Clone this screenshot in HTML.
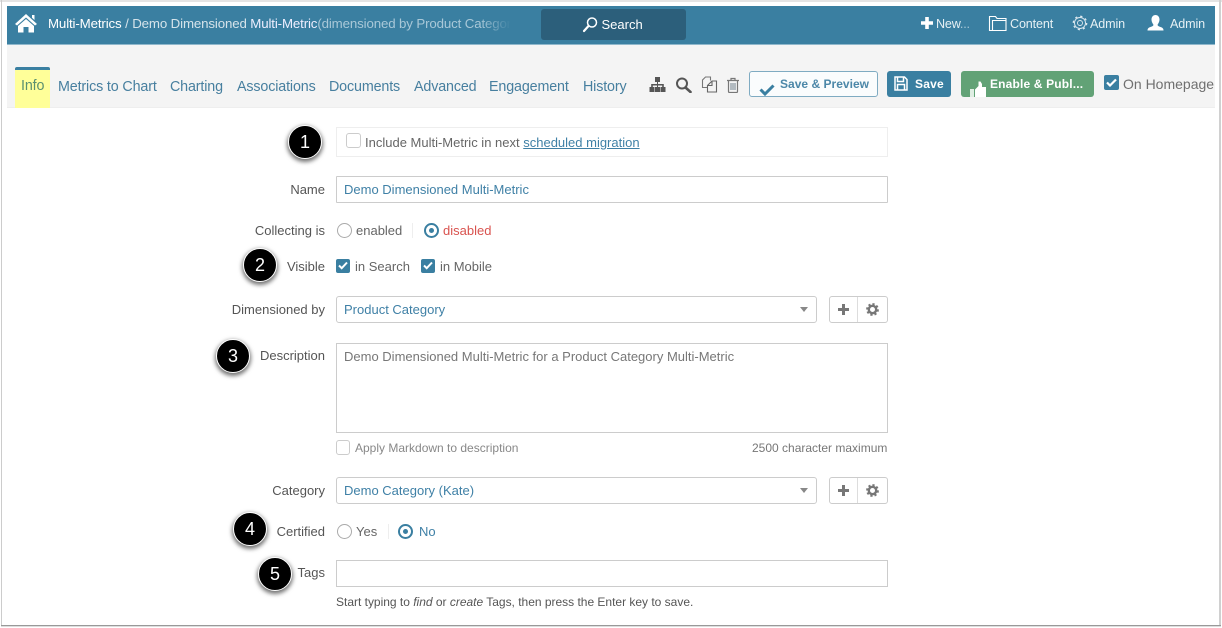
<!DOCTYPE html>
<html><head><meta charset="utf-8">
<style>
html,body{margin:0;padding:0;background:#fff}
#p{position:relative;width:1222px;height:628px;overflow:hidden;background:#fff;font-family:"Liberation Sans",sans-serif;font-size:13px;color:#666}
#p div,#p span.a,#p svg{position:absolute}
.t{white-space:nowrap;line-height:16px}
.l{white-space:nowrap;line-height:16px;right:897px;text-align:right;color:#555}
.b{border:1px solid #ccc;box-sizing:border-box;background:#fff}
.blue{color:#3f80a6}
.tab{font-size:14.3px;color:#477f9f;top:79px;white-space:nowrap;line-height:16px;letter-spacing:-.14px}
.num{width:34px;height:34px;border-radius:50%;background:#000;border:1px solid #fff;box-shadow:0 2px 4px 1px rgba(0,0,0,.55);color:#fff;font-size:18px;line-height:32px;text-align:center;box-sizing:border-box;font-weight:normal}
.cb{width:14px;height:14px;background:#3a7fa1;border-radius:2px}
.cbo{width:15px;height:15px;border:1px solid #ccc;border-radius:3px;box-sizing:border-box;background:#fff}
.r{width:15px;height:15px;border:1px solid #aaa;border-radius:50%;box-sizing:border-box;background:#fff}
.ro{width:15px;height:15px;border:2px solid #3a7fa1;border-radius:50%;box-sizing:border-box;background:#fff}
.ro:after{content:"";position:absolute;left:3px;top:3px;width:5px;height:5px;border-radius:50%;background:#3a7fa1}
.h{color:#fff;top:16px;line-height:16px;white-space:nowrap;font-size:12.6px}
</style></head><body><div id="p">
<div style="left:0;top:0;width:1222px;height:2px;background:#e4e4e4"></div>
<div style="left:1px;top:0;width:1px;height:626px;background:#ccc"></div>
<div style="left:1219px;top:0;width:2px;height:626px;background:#d0d0d0"></div>
<div style="left:1px;top:625px;width:1220px;height:1px;background:#999"></div>
<div style="left:1px;top:626px;width:1220px;height:1px;background:#ddd"></div>

<div style="left:7px;top:6px;width:1208px;height:38px;background:#3a7fa1"></div>
<div style="left:7px;top:44px;width:1208px;height:1px;background:#8fb7cb"></div>
<div style="left:7px;top:45px;width:1208px;height:62px;background:#f4f4f4"></div>
<div style="left:7px;top:107px;width:1208px;height:1px;background:#eee"></div>

<svg style="left:14px;top:13px" width="24" height="20" viewBox="0 0 24 20"><path fill="#fff" d="M12 1 L23 11 L21 12.5 L12 4.5 L3 12.500 L1 11Z M18 2h2.500v5l-2.500-2.200Z M12 6 L20 13 V19.500 H14.500 V14 H9.500 V19.500 H4 V13Z"/></svg>
<div class="t" style="left:48px;top:16px;width:465px;overflow:hidden;color:#fff;font-size:13.300px;letter-spacing:-.14px"><span style="color:#fff">Multi-Metrics</span> <span style="color:#d5e3ea">/ Demo Dimensioned</span> <span style="color:#eef">Multi-Metric</span><span style="color:#a9c8d8">(dimensioned by Product Category</span></div>
<div style="left:480px;top:8px;width:36px;height:34px;background:linear-gradient(90deg,rgba(58,127,161,0),#3a7fa1 85%)"></div>

<div style="left:541px;top:9px;width:145px;height:31px;background:#2c5f7b;border-radius:3px"></div>
<svg style="left:582px;top:16px" width="16" height="17" viewBox="0 0 16 17"><circle cx="10" cy="6.500" r="4.500" fill="none" stroke="#fff" stroke-width="1.500"/><path d="M6.500 10 L2 15" stroke="#fff" stroke-width="2.200" stroke-linecap="round"/></svg>
<div class="t" style="left:601.500px;top:17px;color:#fff;font-size:13px">Search</div>

<svg style="left:921px;top:17px" width="12" height="12" viewBox="0 0 12 12"><path fill="#fff" d="M4.200 0h3.600v4.200H12v3.600H7.800V12H4.200V7.800H0V4.200h4.200z"/></svg>
<div class="h" style="left:936px;color:#e6f0f4;letter-spacing:-.2px">New<span style="color:#a9c8d8">...</span></div>
<svg style="left:988px;top:15px" width="19" height="17" viewBox="0 0 19 17"><path fill="none" stroke="#fff" stroke-width="1.100" d="M1.500 15.500V1.500h6l1.500 2h9v12z M4.500 15.500V5.500h13.500"/></svg>
<div class="h" style="left:1010px;color:#e6f0f4;letter-spacing:-.15px">Content</div>
<svg style="left:1072px;top:15px" width="16" height="16" viewBox="0 0 16 16"><circle cx="8" cy="8" r="2.500" fill="none" stroke="#dfeaf0" stroke-width=".9"/><circle cx="8" cy="8" r="5.500" fill="none" stroke="#dfeaf0" stroke-width=".9"/><circle cx="8" cy="8" r="6.700" fill="none" stroke="#dfeaf0" stroke-width="1.300" stroke-dasharray="2.200 3.060"/></svg>
<div class="h" style="left:1090px;color:#e6f0f4;letter-spacing:-.15px">Admin</div>
<svg style="left:1147px;top:15px" width="17" height="16" viewBox="0 0 17 16"><path fill="#fff" d="M8.500 0C11 0 12.500 2 12.500 4.500S11 9 10.500 9.800c0 1 1 1.500 3 2.200 2 .7 3 1.500 3 3.500H.5c0-2 1-2.800 3-3.500s3-1.200 3-2.200C6 9 4.500 7 4.500 4.500S6 0 8.500 0z"/></svg>
<div class="h" style="left:1170px;color:#e6f0f4;letter-spacing:-.15px">Admin</div>

<div style="left:15px;top:68px;width:35px;height:40px;background:#ffff99"></div>
<div style="left:15px;top:67px;width:35px;height:3px;background:#3a7fa1;border-radius:2px 2px 0 0"></div>
<div class="tab" style="left:21px;top:78px;color:#5a9070">Info</div>
<div class="tab" style="left:58px">Metrics to Chart</div>
<div class="tab" style="left:170px">Charting</div>
<div class="tab" style="left:237px">Associations</div>
<div class="tab" style="left:329px">Documents</div>
<div class="tab" style="left:414px">Advanced</div>
<div class="tab" style="left:489px">Engagement</div>
<div class="tab" style="left:583px">History</div>

<svg style="left:649px;top:77px" width="17" height="15" viewBox="0 0 17 15"><path fill="#555" d="M6 0h5v5H9V7H14.800V10H16.500V15H11.500V10H13.200V8.500H9V10H11V15H6V10H8V8.500H3.800V10H5.500V15H.5V10H2.200V7H8V5H6z"/></svg>
<svg style="left:675px;top:77px" width="17" height="16" viewBox="0 0 17 16"><circle cx="7" cy="6.500" r="5" fill="none" stroke="#555" stroke-width="2"/><path d="M10.500 10.500L15.500 15" stroke="#555" stroke-width="2.600" stroke-linecap="round"/></svg>
<svg style="left:701px;top:76px" width="17" height="17" viewBox="0 0 17 17"><path fill="none" stroke="#777" stroke-width="1.100" d="M6 11.500H1.500V4L4.500 1H9.500V4.500"/><path fill="none" stroke="#666" stroke-width="1.100" d="M11 5H15.500V16H6.500V9.500z M6.500 9.500H11V5"/></svg>
<svg style="left:726px;top:77px" width="14" height="16" viewBox="0 0 14 16"><path fill="none" stroke="#777" stroke-width="1.200" d="M1 3.500H13 M5 3.500V1.500H9V3.500 M2.500 3.500V14.500a1 1 0 0 0 1 1H10.500a1 1 0 0 0 1-1V3.500"/><path fill="none" stroke="#7d8a95" stroke-width="1.100" d="M5 6V13 M7 6V13 M9 6V13"/></svg>

<div style="left:749px;top:71px;width:129px;height:26px;box-sizing:border-box;border:1px solid #7fabc2;border-radius:3px;background:#fafcfd"></div>
<svg style="left:759px;top:83px" width="16" height="13" viewBox="0 0 16 13"><path fill="none" stroke="#3a7fa1" stroke-width="3" d="M1.500 6.500L6 11L14.500 2.500"/></svg>
<div class="t" style="left:780px;top:76px;color:#4c87a8;font-size:12px;font-weight:bold;letter-spacing:.02px">Save &amp; Preview</div>

<div style="left:887px;top:71px;width:64px;height:26px;background:#3a7fa1;border-radius:3px"></div>
<svg style="left:894px;top:76px" width="14" height="15" viewBox="0 0 14 15"><path fill="none" stroke="#fff" stroke-width="1.500" d="M1 1H10.500L13 3.500V14H1z M3.500 1V5.500H9.500V1 M3.500 14V8.500H10.500V14"/></svg>
<div class="t" style="left:915px;top:76px;color:#fff;font-size:12px;font-weight:bold;letter-spacing:.2px">Save</div>

<div style="left:961px;top:71px;width:133px;height:26px;background:#62a276;border-radius:3px"></div>
<svg style="left:969px;top:81px" width="18" height="16" viewBox="0 0 18 16"><path fill="#dfeee3" d="M1 8h4v8H1z"/><path fill="#fff" d="M6 8.500L9.500 5V.5h2l1.500 2.500v3h4V16H6z"/></svg>
<div class="t" style="left:990px;top:76px;color:#fff;font-size:12px;font-weight:bold;letter-spacing:.16px">Enable &amp; Publ...</div>

<div class="cb" style="left:1104px;top:75px;width:15px;height:15px"></div>
<svg style="left:1106px;top:78px" width="11" height="9" viewBox="0 0 11 9"><path fill="none" stroke="#fff" stroke-width="2.200" d="M1 4.500L4 7.500L10 1.500"/></svg>
<div class="t" style="left:1123px;top:76px;font-size:14px;color:#6f6f6f">On Homepage</div>

<div class="num" style="left:288px;top:125px">1</div>
<div class="b" style="left:336px;top:127px;width:552px;height:30px;border-color:#eee"></div>
<div class="cbo" style="left:346px;top:133px"></div>
<div class="t" style="left:365px;top:135px;color:#666;font-size:13px">Include Multi-Metric in next <span style="color:#3f80a6;text-decoration:underline">scheduled migration</span></div>

<div class="l" style="top:182px;font-size:13px">Name</div>
<div class="b" style="left:336px;top:176px;width:552px;height:27px;border-radius:1px"></div>
<div class="t blue" style="left:344px;top:182px;font-size:13px">Demo Dimensioned Multi-Metric</div>

<div class="l" style="top:223px;font-size:13px">Collecting is</div>
<div class="r" style="left:337px;top:223px"></div>
<div class="t" style="left:356px;top:223px;font-size:13px;color:#666">enabled</div>
<div style="left:412px;top:223px;width:1px;height:15px;background:#eee"></div>
<div class="ro" style="left:424px;top:223px"></div>
<div class="t" style="left:443px;top:223px;font-size:13px;color:#d9534f">disabled</div>

<div class="num" style="left:243px;top:248px">2</div>
<div class="l" style="top:259px;font-size:13px">Visible</div>
<div class="cb" style="left:336px;top:259px"></div>
<svg style="left:338px;top:261px" width="10" height="9" viewBox="0 0 10 9"><path fill="none" stroke="#fff" stroke-width="2" d="M1 4.500L3.700 7.200L9 1.500"/></svg>
<div class="t" style="left:355px;top:259px;font-size:13px;color:#666">in Search</div>
<div class="cb" style="left:421px;top:259px"></div>
<svg style="left:423px;top:261px" width="10" height="9" viewBox="0 0 10 9"><path fill="none" stroke="#fff" stroke-width="2" d="M1 4.500L3.700 7.200L9 1.500"/></svg>
<div class="t" style="left:440px;top:259px;font-size:13px;color:#666">in Mobile</div>

<div class="l" style="top:302px;font-size:13px">Dimensioned by</div>
<div class="b" style="left:336px;top:296px;width:481px;height:27px;border-radius:3px"></div>
<div class="t blue" style="left:344px;top:302px;font-size:13px">Product Category</div>
<div style="left:800px;top:307px;width:0;height:0;border-left:4.500px solid transparent;border-right:4.500px solid transparent;border-top:5px solid #888"></div>
<div class="b" style="left:829px;top:296px;width:59px;height:27px;border-radius:3px"></div>
<div style="left:857px;top:297px;width:1px;height:25px;background:#ddd"></div>
<svg style="left:838px;top:304px" width="11" height="11" viewBox="0 0 11 11"><path fill="#777" d="M4 0h3v4h4v3H7v4H4V7H0V4h4z"/></svg>
<svg style="left:866px;top:303px" width="13" height="13" viewBox="0 0 13 13"><circle cx="6.500" cy="6.500" r="3.700" fill="none" stroke="#777" stroke-width="2.400"/><circle cx="6.500" cy="6.500" r="5.400" fill="none" stroke="#777" stroke-width="2" stroke-dasharray="2.200 2"/></svg>

<div class="num" style="left:216px;top:339px">3</div>
<div class="l" style="top:348px;font-size:13px">Description</div>
<div class="b" style="left:336px;top:343px;width:552px;height:90px"></div>
<div class="t" style="left:344px;top:349px;font-size:13px;color:#777">Demo Dimensioned Multi-Metric for a Product Category Multi-Metric</div>
<div class="cbo" style="left:336px;top:440px;width:14px;height:15px"></div>
<div class="t" style="left:355px;top:440px;font-size:12px;color:#888">Apply Markdown to description</div>
<div class="t" style="left:752px;top:440px;font-size:12px;color:#777">2500 character maximum</div>

<div class="l" style="top:483px;font-size:13px">Category</div>
<div class="b" style="left:336px;top:477px;width:481px;height:27px;border-radius:3px"></div>
<div class="t blue" style="left:344px;top:483px;font-size:13px">Demo Category (Kate)</div>
<div style="left:800px;top:488px;width:0;height:0;border-left:4.500px solid transparent;border-right:4.500px solid transparent;border-top:5px solid #888"></div>
<div class="b" style="left:829px;top:477px;width:59px;height:27px;border-radius:3px"></div>
<div style="left:857px;top:478px;width:1px;height:25px;background:#ddd"></div>
<svg style="left:838px;top:485px" width="11" height="11" viewBox="0 0 11 11"><path fill="#777" d="M4 0h3v4h4v3H7v4H4V7H0V4h4z"/></svg>
<svg style="left:866px;top:484px" width="13" height="13" viewBox="0 0 13 13"><circle cx="6.500" cy="6.500" r="3.700" fill="none" stroke="#777" stroke-width="2.400"/><circle cx="6.500" cy="6.500" r="5.400" fill="none" stroke="#777" stroke-width="2" stroke-dasharray="2.200 2"/></svg>

<div class="num" style="left:233px;top:512px">4</div>
<div class="l" style="top:524px;font-size:13px">Certified</div>
<div class="r" style="left:337px;top:524px"></div>
<div class="t" style="left:356px;top:524px;font-size:13px;color:#666">Yes</div>
<div style="left:388px;top:524px;width:1px;height:15px;background:#eee"></div>
<div class="ro" style="left:398px;top:524px"></div>
<div class="t" style="left:419px;top:524px;font-size:13px;color:#3f80a6">No</div>

<div class="num" style="left:258px;top:557px">5</div>
<div class="l" style="top:565px;font-size:13px">Tags</div>
<div class="b" style="left:336px;top:560px;width:552px;height:27px"></div>
<div class="t" style="left:336px;top:594px;font-size:12px;letter-spacing:-.01px;color:#555">Start typing to <i>find</i> or <i>create</i> Tags, then press the Enter key to save.</div>
</div></body></html>
